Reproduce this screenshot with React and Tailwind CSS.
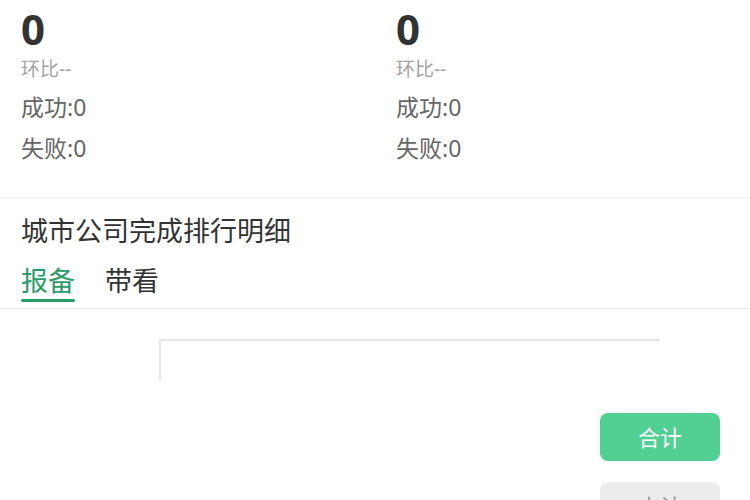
import React from "react";

const font = { fontFamily: '"Noto Sans", "Noto Sans CJK SC", sans-serif' };

function Stat() {
  return (
    <div className="flex flex-col pl-[21px]">
      <div className="h-[58px] leading-[58px] text-[42px] font-bold text-[#333333]">0</div>
      <div className="h-[22px] leading-[22px] text-[19px] text-[#a3a3a3]">环比--</div>
      <div className="mt-[12px] h-[30px] leading-[30px] text-[23px] text-[#666666]">成功:0</div>
      <div className="mt-[11px] h-[30px] leading-[30px] text-[23px] text-[#666666]">失败:0</div>
    </div>
  );
}

export default function App() {
  return (
    <div className="w-[750px] h-[500px] overflow-hidden bg-white" style={font}>
      <div className="grid grid-cols-2 h-[197px]">
        <Stat />
        <Stat />
      </div>
      <div className="h-[2px] bg-[#f4f4f4]" />
      <div className="h-[64px] flex items-center pl-[21px] text-[27px] text-[#333333]">
        城市公司完成排行明细
      </div>
      <div className="flex pl-[21px] gap-[30px] h-[46px] border-b border-[#eeeeee]">
        <div className="flex flex-col">
          <div className="h-[36px] leading-[36px] text-[27px] text-[#2a9d67]">报备</div>
          <div className="h-[3px] bg-[#2a9d67] rounded-full" />
        </div>
        <div className="h-[36px] leading-[36px] text-[27px] text-[#333333]">带看</div>
      </div>
      <div className="pt-[30px] pl-[159px]">
        <div className="w-[501px] h-[41px] border-t-2 border-l-2 border-[#e6e6e6]" />
      </div>
      <div className="flex flex-col items-end pr-[30px] pt-[33px] gap-[21px]">
        <div className="w-[120px] h-[48px] rounded-[8px] bg-[#52d093] flex items-center justify-center text-[22px] text-white">
          合计
        </div>
        <div className="w-[120px] h-[48px] rounded-[8px] bg-[#ececec] flex items-center justify-center text-[22px] text-[#999999]">
          小计
        </div>
      </div>
    </div>
  );
}
